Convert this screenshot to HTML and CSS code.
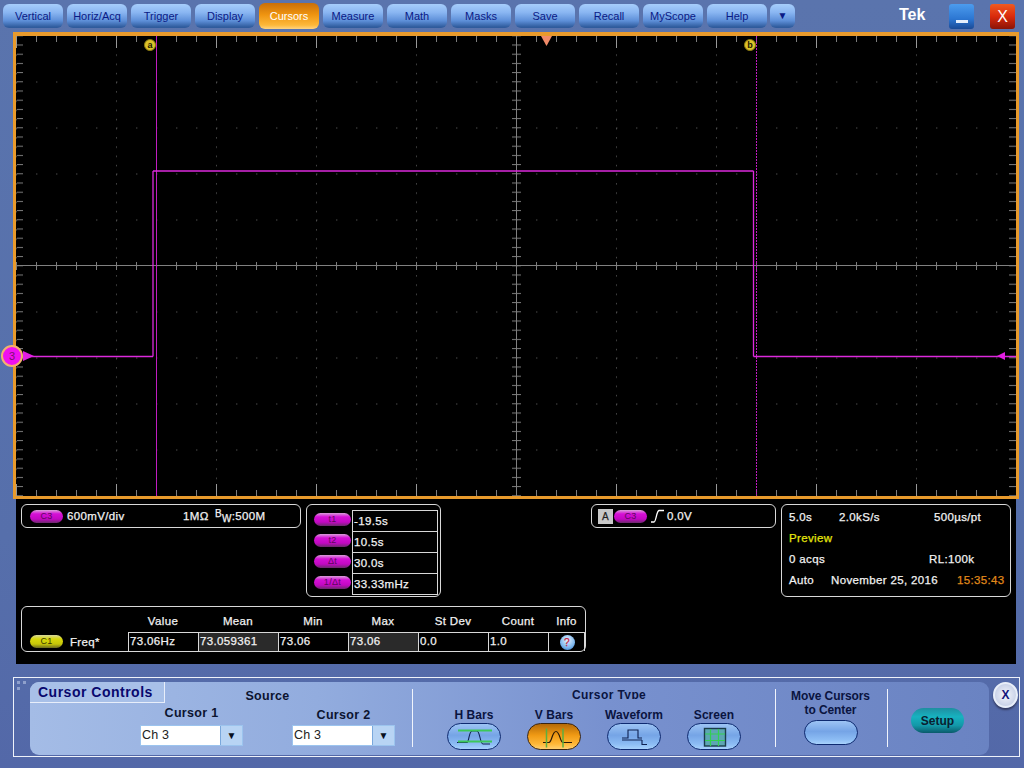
FILE: index.html
```html
<!DOCTYPE html>
<html lang="en">
<head>
<meta charset="utf-8">
<title>Tek Scope</title>
<link rel="stylesheet" href="styles.css">
</head>
<body>
<header class="menubar">
  <nav class="menu">
    <button class="mbtn">Vertical</button>
    <button class="mbtn">Horiz/Acq</button>
    <button class="mbtn">Trigger</button>
    <button class="mbtn">Display</button>
    <button class="mbtn active">Cursors</button>
    <button class="mbtn">Measure</button>
    <button class="mbtn">Math</button>
    <button class="mbtn">Masks</button>
    <button class="mbtn">Save</button>
    <button class="mbtn">Recall</button>
    <button class="mbtn">MyScope</button>
    <button class="mbtn">Help</button>
    <button class="mbtn more">▼</button>
  </nav>
  <div class="brand">Tek</div>
  <button class="winbtn min"><span class="minbar"></span></button>
  <button class="winbtn close">X</button>
</header>

<main class="screen">
  <svg class="plot" viewBox="16 36 1000 460" width="1000" height="460" xmlns="http://www.w3.org/2000/svg">
    <defs>
      <pattern id="dotsCol" patternUnits="userSpaceOnUse" x="16" y="36" width="100" height="9.2"><rect x="0" y="0" width="1" height="1.4" fill="#4c4c4c"/></pattern>
      <pattern id="dotsRow" patternUnits="userSpaceOnUse" x="16" y="35.5" width="20" height="46"><rect x="0" y="0" width="1.4" height="1" fill="#4c4c4c"/></pattern>
      <pattern id="tickX" patternUnits="userSpaceOnUse" x="16" y="36" width="20" height="460"><rect x="0" y="0" width="1" height="460" fill="#7c7c7c"/></pattern>
      <pattern id="tickXMajor" patternUnits="userSpaceOnUse" x="16" y="36" width="100" height="460"><rect x="0" y="0" width="1" height="460" fill="#989898"/></pattern>
      <pattern id="tickY" patternUnits="userSpaceOnUse" x="16" y="35.3" width="1000" height="9.2"><rect x="0" y="0" width="1000" height="1" fill="#7c7c7c"/></pattern>
    </defs>
    <rect x="16" y="36" width="1000" height="460" fill="url(#dotsCol)"/>
    <rect x="16" y="36" width="1000" height="460" fill="url(#dotsRow)"/>
    <rect x="16" y="36" width="1000" height="6" fill="url(#tickX)"/>
    <rect x="16" y="36" width="1000" height="12" fill="url(#tickXMajor)"/>
    <rect x="16" y="490" width="1000" height="6" fill="url(#tickX)"/>
    <rect x="16" y="484" width="1000" height="12" fill="url(#tickXMajor)"/>
    <rect x="17" y="36" width="6" height="460" fill="url(#tickY)"/>
    <rect x="1009" y="36" width="7" height="460" fill="url(#tickY)"/>
    <rect x="512" y="36" width="9" height="460" fill="url(#tickY)"/>
    <rect x="16" y="262" width="1000" height="8" fill="url(#tickX)"/>
    <rect x="16" y="265" width="1000" height="1" fill="#808080"/>
    <rect x="516" y="36" width="1" height="460" fill="#808080"/>

    <line class="cursor" x1="156.5" y1="36" x2="156.5" y2="496"/>
    <line class="cursor dash" x1="756.5" y1="36" x2="756.5" y2="496"/>
    <line class="trace" x1="26" y1="356.5" x2="153" y2="356.5"/>
    <line class="trace" x1="153" y1="356.5" x2="153" y2="171"/>
    <line class="trace" x1="153" y1="171" x2="753.5" y2="171"/>
    <line class="trace" x1="753.5" y1="171" x2="753.5" y2="356.5"/>
    <line class="trace" x1="753.5" y1="356.5" x2="1016" y2="356.5"/>

    <circle class="cmark" cx="150" cy="45" r="5.5"/>
    <text class="cmark-t" x="150" y="48">a</text>
    <circle class="cmark" cx="750" cy="45" r="5.5"/>
    <text class="cmark-t" x="750" y="48">b</text>

    <polygon class="trig" points="541,36 552,36 546.5,46"/>
    <polygon class="lvl" points="997,356 1005,352 1005,360"/>
    <polygon class="lvl" points="23,351 34,356 23,361"/>
    <circle class="chan" cx="12" cy="356" r="10"/>
    <text class="chan-t" x="12" y="360">3</text>
  </svg>
</main>

<section class="readout">
  <div class="box chanbox">
    <span class="pill mag">C3</span><span class="scale">600mV/div</span>
    <span class="imp">1MΩ</span><span class="bw"><sup>B</sup><sub>W</sub>:500M</span>
  </div>
  <div class="box curbox">
    <div class="curpills">
      <span class="pill mag wide">t1</span>
      <span class="pill mag wide">t2</span>
      <span class="pill mag wide">Δt</span>
      <span class="pill mag wide">1/Δt</span>
    </div>
    <div class="curvals">
      <div>-19.5s</div>
      <div>10.5s</div>
      <div>30.0s</div>
      <div>33.33mHz</div>
    </div>
  </div>
  <div class="box trigbox">
    <span class="trig-a">A</span><span class="pill mag">C3</span>
    <svg class="slope" width="15" height="14" viewBox="0 0 15 14"><path d="M1 13 H4 C6 13 6.5 2 9 1.5 H14" fill="none" stroke="#fff" stroke-width="1.3"/></svg>
    <span>0.0V</span>
  </div>
  <div class="box hbox">
    <div class="hrow"><span class="w50">5.0s</span><span class="w95">2.0kS/s</span><span>500µs/pt</span></div>
    <div class="hrow prev">Preview</div>
    <div class="hrow"><span class="w140">0 acqs</span><span>RL:100k</span></div>
    <div class="hrow"><span class="w42">Auto</span><span class="w126">November 25, 2016</span><span class="time">15:35:43</span></div>
  </div>
  <div class="box measbox">
    <div class="mhead">
      <span class="c0"></span><span class="c1">Value</span><span class="c2">Mean</span><span class="c3">Min</span><span class="c4">Max</span><span class="c5">St Dev</span><span class="c6">Count</span><span class="c7">Info</span>
    </div>
    <div class="mrow">
      <span class="c0"><span class="pill yel">C1</span><span class="mname">Freq*</span></span>
      <span class="c1 cell">73.06Hz</span><span class="c2 cell grey">73.059361</span><span class="c3 cell">73.06</span><span class="c4 cell grey">73.06</span><span class="c5 cell">0.0</span><span class="c6 cell">1.0</span><span class="c7 cell info"><span class="infoicon">?</span></span>
    </div>
  </div>
</section>

<section class="dock">
  <div class="grip"></div>
  <div class="panel">
    <div class="tab">Cursor Controls</div>
    <div class="source">
      <div class="srctitle">Source</div>
      <div class="srcrow">
        <div class="srccol">
          <div class="lbl">Cursor 1</div>
          <div class="combo"><span class="cval">Ch 3</span><span class="carrow">▼</span></div>
        </div>
        <div class="srccol two">
          <div class="lbl">Cursor 2</div>
          <div class="combo"><span class="cval">Ch 3</span><span class="carrow">▼</span></div>
        </div>
      </div>
    </div>
    <div class="sep first"></div>
    <div class="ctype">
      <div class="typetitle">Cursor Type</div>
      <div class="typerow">
        <div class="opt"><div class="olbl">H Bars</div>
          <button class="obtn"><svg width="40" height="24" viewBox="0 0 40 24"><path d="M3 17.5 H13 C15 17 15 6 18 6 H23 C26 6 26 19 29 19 H36" fill="none" stroke="#0e2050" stroke-width="1.1"/><path d="M4 5.5 H38 M4 16.5 H38" stroke="#3cc85a" stroke-width="1.8"/></svg></button></div>
        <div class="opt"><div class="olbl">V Bars</div>
          <button class="obtn on"><svg width="40" height="24" viewBox="0 0 40 24"><path d="M9 17.5 H15 C18 17 18 6.5 22 6.5 C26 6.5 26 17.5 29 17.5 H38" fill="none" stroke="#2a1a08" stroke-width="1.2"/><path d="M12.5 3.5 V22.5 M29 3.5 V22.5" stroke="#5cb040" stroke-width="1.5"/></svg></button></div>
        <div class="opt"><div class="olbl">Waveform</div>
          <button class="obtn"><svg width="40" height="24" viewBox="0 0 40 24"><path d="M8 13 H14 V5 H24 V13 H28 M8 15 H28 M28 15 V19.5 H33" fill="none" stroke="#0e2050" stroke-width="1.1"/></svg></button></div>
        <div class="opt"><div class="olbl">Screen</div>
          <button class="obtn"><svg width="40" height="24" viewBox="0 0 40 24"><rect x="10.5" y="3.5" width="21" height="17.5" fill="#5da6b4" stroke="#1a3c48" stroke-width="1.4"/><path d="M16.5 4 V21 M24.5 4 V21 M11 9 H31 M11 15.5 H31" stroke="#32d052" stroke-width="1.2"/></svg></button></div>
      </div>
    </div>
    <div class="sep"></div>
    <div class="mover">
      <div class="movetxt">Move Cursors<br>to Center</div>
      <button class="obtn movebtn"></button>
    </div>
    <div class="sep"></div>
    <div class="setupwrap"><button class="setup">Setup</button></div>
  </div>
  <button class="dockx">X</button>
</section>
</body>
</html>
```
FILE: styles.css
```css
* { box-sizing: border-box; }
html, body { margin: 0; padding: 0; }
body {
  width: 1024px; height: 768px; overflow: hidden;
  background: linear-gradient(#5a74ad, #566fab 70%, #5368a8);
  font-family: "Liberation Sans", Arial, sans-serif;
}
button { font-family: inherit; padding: 0; cursor: default; }

/* Top menu */
.menubar { height: 32px; display: flex; align-items: flex-start; position: relative; }
.menu { display: flex; gap: 4px; padding: 4px 0 0 3px; width: 840px; }
.mbtn {
  width: 60px; height: 24px; border: 0; border-radius: 6px;
  background: linear-gradient(#a6cdfb 0%, #8ab6f2 35%, #5d8fd8 70%, #2f5b9c 96%);
  color: #0a1a86; font-size: 11px; line-height: 24px;
}
.mbtn.active {
  height: 26px; margin-top: -1px; line-height: 26px; color: #fff;
  background: linear-gradient(#c96f08 0%, #ef9410 45%, #fdb83a 85%, #ffd380 100%);
}
.mbtn.more { width: 25px; margin-left: -1px; font-size: 10px; }
.brand { margin: 6px 0 0 59px; width: 50px; color: #fff; font-size: 16px; font-weight: bold; }
.winbtn {
  width: 25px; height: 25px; border: 0; border-radius: 3px; margin-top: 4px;
  color: #fff; display: flex; align-items: center; justify-content: center;
}
.min { background: linear-gradient(#4c9cee, #2c76d2 60%, #1a4a96); }
.minbar { display: block; width: 12px; height: 3px; background: #e4eefc; margin-top: 9px; }
.close { margin-left: 16px; font-size: 16px; background: linear-gradient(#ee5a20, #d92a0c 50%, #8a1406); }

/* Graticule */
.screen {
  width: 1006px; height: 467px; margin-left: 13px;
  border: 3px solid #e89a2c; border-top-width: 4px; background: #000;
}
.plot { display: block; overflow: visible; }
.trace { stroke: #dc2adc; stroke-width: 1.3; }
.cursor { stroke: #c01cc0; stroke-width: 1; }
.cursor.dash { stroke-dasharray: 2 1; }
.cmark { fill: #dcc22a; stroke: #8a7a10; stroke-width: 1; }
.cmark-t { font: bold 9px "Liberation Sans", sans-serif; text-anchor: middle; fill: #1a1a00; }
.trig { fill: #f08a68; }
.lvl { fill: #e21ee2; }
.chan { fill: #f010f0; stroke: #f4b070; stroke-width: 2; }
.chan-t { font: 11px "Liberation Sans", sans-serif; text-anchor: middle; fill: #7a1070; }

/* Readout */
.readout {
  width: 1000px; height: 165px; margin-left: 16px; padding: 5px;
  background: #000; color: #f2f2f2; font-size: 11.5px; letter-spacing: .35px;
  -webkit-text-stroke: .25px #f2f2f2;
  display: grid; gap: 9px 5px;
  grid-template-columns: 280px 135px 140px 185px 230px;
  grid-template-rows: 93px 46px;
}
.box { border: 1px solid #d8d8d8; border-radius: 6px; }
.pill {
  display: inline-block; width: 33px; height: 13px; border-radius: 7px; flex: none;
  font-size: 9px; line-height: 13px; text-align: center; -webkit-text-stroke: 0;
}
.pill.mag { background: linear-gradient(#d9a0d9, #d60fd6 30%, #c208c2 70%, #6a2a6a); color: #5c0a5c; }
.pill.yel { background: linear-gradient(#d8d8a0, #d8d80c 30%, #c6c608 70%, #6a6a20); color: #3a3a00; }
.pill.wide { width: 37px; }

.chanbox { grid-area: 1 / 1; height: 24px; display: flex; align-items: center; padding-left: 8px; }
.scale { margin-left: 4px; width: 116px; }
.imp { width: 32px; }
.bw sup { font-size: 10px; position: relative; top: -3px; vertical-align: baseline; }
.bw sub { font-size: 10px; position: relative; top: 2px; vertical-align: baseline; }

.curbox { grid-area: 1 / 2; height: 93px; display: flex; padding: 5px 0 0 7px; }
.curpills { width: 38px; display: flex; flex-direction: column; gap: 8px; padding-top: 3px; }
.curvals { width: 86px; height: 85px; border: 1px solid #d8d8d8; }
.curvals div { height: 21px; line-height: 20px; padding-left: 1px; border-bottom: 1px solid #d8d8d8; }
.curvals div:last-child { border-bottom: 0; }

.trigbox { grid-area: 1 / 4; height: 24px; display: flex; align-items: center; padding-left: 6px; }
.trig-a {
  width: 15px; height: 15px; background: #c8c8c8; color: #222; font-size: 10px; -webkit-text-stroke: .25px #222;
  line-height: 15px; text-align: center; margin-right: 1px;
}
.trigbox .pill { margin-right: 3px; }
.slope { margin-right: 2px; }

.hbox { grid-area: 1 / 5; height: 93px; padding: 2px 0 0 7px; }
.hrow { height: 21px; line-height: 21px; display: flex; white-space: nowrap; }
.prev { color: #e6e60c; -webkit-text-stroke: .25px #e6e60c; }
.time { color: #e08a1a; -webkit-text-stroke: .25px #e08a1a; margin-left: -1px; }
.w50 { width: 50px; }
.w95 { width: 95px; }
.w140 { width: 140px; }
.w42 { width: 42px; }
.w126 { width: 127px; }

.measbox {
  grid-area: 2 / 1 / 2 / 4; height: 46px; display: flex; flex-direction: column;
  padding: 5px 0 0 0;
}
.mhead { height: 21px; display: flex; line-height: 18px; text-align: center; }
.mrow { height: 19px; display: flex; line-height: 16px; }
.c0 { width: 106px; display: flex; align-items: center; padding-left: 8px; }
.c1 { width: 70px; } .c2 { width: 80px; } .c3, .c4, .c5 { width: 70px; }
.c6 { width: 60px; } .c7 { width: 37px; }
.cell { border: 1px solid #d8d8d8; border-bottom: 0; border-right: 0; padding-left: 1px; }
.cell.grey { background: #2a2a2a; }
.info { display: flex; justify-content: center; align-items: center; border-right: 1px solid #d8d8d8; }
.mname { margin-left: 7px; }
.infoicon {
  width: 15px; height: 15px; border-radius: 50%; font-size: 10px; line-height: 15px; text-align: center; color: #c02040; -webkit-text-stroke: .25px #c02040;
  background: radial-gradient(circle at 50% 35%, #e8f4ff, #7ab4ec 60%, #2a6cc4);
}

/* Dock */
.dock {
  width: 1007px; height: 80px; margin: 13px 0 0 13px; padding: 4px 0 0 16px;
  border: 1px solid #eef2fa; position: relative;
}
.grip {
  position: absolute; left: 3px; top: 3px; width: 9px; height: 9px;
  background: linear-gradient(90deg, #8fa0cc 3px, transparent 3px 6px, #8fa0cc 6px) top / 9px 3px no-repeat,
              linear-gradient(90deg, #8fa0cc 3px, transparent 3px) bottom / 9px 3px no-repeat;
}
.panel {
  position: relative; width: 959px; height: 73px; border-radius: 9px;
  background: linear-gradient(90deg, #a4bce6, #92acde 30%, #7891cf 60%, #6a83c2);
  display: flex; padding-top: 7px;
}
.tab {
  position: absolute; left: 0; top: 0; width: 135px; height: 21px;
  background: #a8c0e8; border-right: 1px solid #e8eefa; border-bottom: 1px solid #e8eefa;
  border-radius: 9px 0 0 0; color: #08086e; font-size: 14px; font-weight: bold;
  line-height: 20px; padding-left: 8px; letter-spacing: .5px; white-space: nowrap;
}
.source { margin-left: 110px; width: 255px; margin-right: 17px; color: #0c1430; font-weight: bold; font-size: 12.5px; }
.srctitle { text-align: center; height: 17px; line-height: 15px; letter-spacing: .3px; }
.srcrow { display: flex; gap: 49px; }
.srccol { width: 103px; }
.lbl { text-align: center; height: 19px; line-height: 14px; letter-spacing: .3px; }
.srccol.two .lbl { line-height: 18px; }
.combo { display: flex; height: 21px; background: #fff; border: 1px solid #9cc4ee; }
.cval { flex: 1; font-size: 12.5px; font-weight: normal; color: #222; line-height: 19px; padding-left: 1px; letter-spacing: .2px; }
.carrow { width: 22px; background: #b8d4f4; font-size: 10px; text-align: center; line-height: 19px; color: #081020; border-left: 1px solid #7aa8dc; }

.sep { width: 1px; height: 58px; background: #f0f4fc; flex: none; }
.ctype { width: 362px; padding-left: 21px; color: #0a1440; font-weight: bold; font-size: 12px; }
.typetitle {
  margin-left: 138px; height: 11px; line-height: 14px; overflow: hidden; letter-spacing: .4px; white-space: nowrap; width: 80px;
  margin-bottom: 9px; margin-top: -1px;
}
.typerow { display: flex; }
.opt { width: 80px; display: flex; flex-direction: column; align-items: center; }
.olbl { height: 14px; line-height: 14px; margin-bottom: 1px; letter-spacing: .05px; }
.obtn {
  width: 54px; height: 27px; border: 1px solid #0e2a70; border-radius: 14px;
  background: linear-gradient(#9dc4f4, #75a4e6 45%, #8cbcf4 80%, #a8d2fc);
  display: flex; align-items: center; justify-content: center;
}
.obtn.on { background: linear-gradient(#b46a08, #f09a14 45%, #ffb838 80%, #ffd070); border-color: #3a2410; }
.mover { width: 111px; padding-right: 2px; display: flex; flex-direction: column; align-items: center; color: #0a1440; font-weight: bold; font-size: 12px; }
.movetxt { text-align: center; line-height: 14px; height: 31px; letter-spacing: -.1px; }
.movebtn { height: 25px; }
.setupwrap { padding: 19px 0 0 23px; }
.setup {
  width: 53px; height: 25px; border: 0; border-radius: 13px; font-size: 12px; font-weight: bold; color: #0a2030;
  background: linear-gradient(#1f8ea0, #17b2c0 35%, #1398a8 70%, #0a5a6a);
}
.dockx {
  position: absolute; left: 979px; top: 4px; width: 25px; height: 26px; border-radius: 50%;
  border: 2px solid #e8eef8; background: radial-gradient(circle, #f4f6fc, #b8c4e0);
  color: #14147c; font-size: 12px; font-weight: bold; box-shadow: 0 2px 2px #333a60;
}
```
